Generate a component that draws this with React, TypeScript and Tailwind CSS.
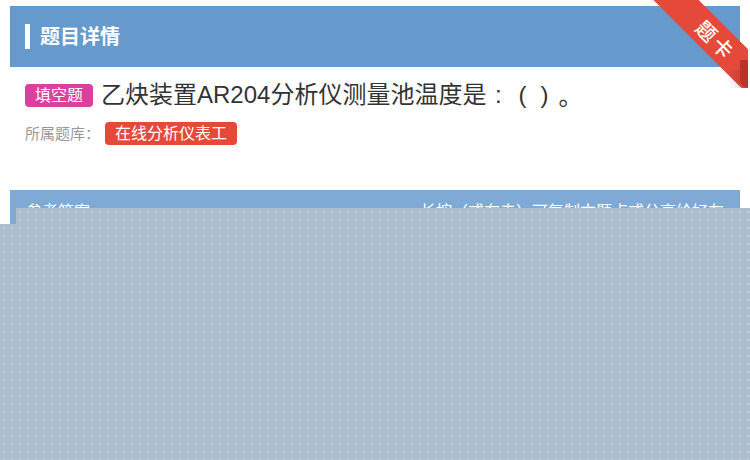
import React from 'react';

const FONT = '"Liberation Sans", "Noto Sans CJK SC", sans-serif';
const CJK = '"Noto Sans CJK SC", sans-serif';

function Ribbon() {
  return (
    <div className="absolute left-[640px] top-0 w-[108px] h-[88px] overflow-hidden pointer-events-none">
      {/* band */}
      <div className="absolute left-[-24px] top-[24px] w-[200px] h-[32px] bg-[#e5493a] rotate-45 flex items-center justify-center">
        <span className="text-white text-[20px] font-medium tracking-[3px] leading-none" style={{ fontFamily: CJK }}>
          题卡
        </span>
      </div>
      {/* fold at the bottom right */}
      <div className="absolute left-[100px] top-[60px] w-[8px] h-[28px] bg-[#b9352a] rounded-bl-[8px]" />
      <div className="absolute left-[86px] top-[70px] w-[14px] h-[18px] bg-gradient-to-r from-transparent to-black/10" />
    </div>
  );
}

// full-width punctuation kept in a fixed box
function Punct({ ch, box, align }: { ch: string; box: string; align: string }) {
  return <span className={`inline-block ${box} ${align}`}>{ch}</span>;
}

export default function App() {
  return (
    <div className="relative w-[750px] h-[460px] bg-white overflow-hidden" style={{ fontFamily: FONT }}>
      {/* header */}
      <div className="mx-[10px] mt-[6px] h-[61px] bg-[#6699cc] flex items-center px-[15px]">
        <span className="w-[5px] h-[25px] bg-white" />
        <h1 className="ml-[10px] text-white text-[20px] font-bold">题目详情</h1>
      </div>
      <Ribbon />

      {/* question */}
      <div className="px-[25px]">
        <div className="mt-[14px] flex items-center">
          <span className="h-[23px] px-[10px] rounded-[4px] bg-[#dd3f9f] text-white text-[16px] leading-[23px]">
            填空题
          </span>
          <span className="ml-[8px] text-[24px] text-[#333] leading-[28px] flex items-center">
            乙炔装置AR204分析仪测量池温度是
            <Punct ch=":" box="w-[24px]" align="text-center" />
            <Punct ch="(" box="w-[24px]" align="text-center" />
            <span className="inline-block w-[6px]" />
            <Punct ch=")" box="w-[18px]" align="text-left" />
            <span style={{ fontFamily: CJK }}>。</span>
          </span>
        </div>
        <div className="mt-[13px] flex items-center">
          <span className="text-[15px] text-[#999]" style={{ fontFamily: CJK }}>所属题库：</span>
          <span className="ml-[5px] h-[23px] px-[10px] rounded-[4px] bg-[#e5493a] text-white text-[16px] leading-[23px]">
            在线分析仪表工
          </span>
        </div>
      </div>

      {/* answer */}
      <div
        className="mx-[10px] mt-[45px] h-[40px] bg-[#80aad6] flex items-center justify-between px-[16px] text-white text-[16px]"
        style={{ fontFamily: CJK }}
      >
        <span>参考答案</span>
        <span>长按（或右击）可复制本题点或分享给好友</span>
      </div>

      {/* mask */}
      <div className="absolute left-[16px] right-0 top-[208px] h-[20px] bg-[#adbfcf] bg-[radial-gradient(circle,rgba(255,255,255,0.28)_0.8px,transparent_1.2px)] bg-[length:8px_8px]" />
      <div className="absolute left-0 right-0 top-[224px] bottom-0 bg-[#adbfcf] bg-[radial-gradient(circle,rgba(255,255,255,0.28)_0.8px,transparent_1.2px)] bg-[length:8px_8px]" />
    </div>
  );
}
